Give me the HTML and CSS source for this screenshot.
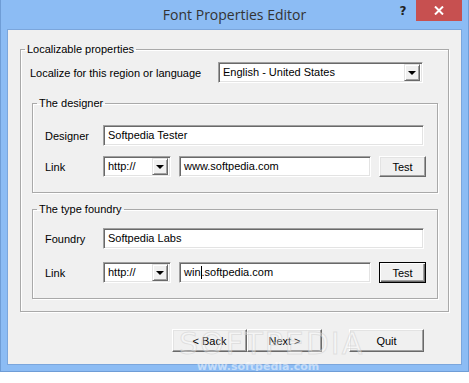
FILE: index.html
```html
<!DOCTYPE html>
<html lang="en">

<head>
    <meta charset="UTF-8">
    <meta name="viewport" content="width=device-width, initial-scale=1.0">
    <title>Font Properties Editor</title>
    <link rel="stylesheet" href="styles.css">
</head>

<body>
    <div class="window">
        <div class="titlebar">
            <span></span>
            <h1>Font Properties Editor</h1>
            <div class="caption-buttons">
                <span class="help">?</span>
                <span class="close">
                    <svg width="10" height="9" viewBox="0 0 10 9">
                        <path d="M1 0.5 L9 8.5 M9 0.5 L1 8.5" stroke="#fff" stroke-width="2" fill="none" />
                    </svg>
                </span>
            </div>
        </div>

        <div class="client">
            <fieldset class="group outer">
                <legend>Localizable properties</legend>
                <div class="group-body">
                    <div class="row lang-row">
                        <label>Localize for this region or language</label>
                        <div class="combo lang-combo">
                            <span>English - United States</span>
                            <span class="drop"><i></i></span>
                        </div>
                    </div>

                    <fieldset class="group inner designer">
                        <legend>The designer</legend>
                        <div class="inner-body">
                            <div class="row">
                                <label>Designer</label>
                                <div class="edit wide">Softpedia Tester</div>
                            </div>
                            <div class="row">
                                <label>Link</label>
                                <div class="combo proto">
                                    <span>http://</span>
                                    <span class="drop"><i></i></span>
                                </div>
                                <div class="edit url">www.softpedia.com</div>
                                <button class="btn test">Test</button>
                            </div>
                        </div>
                    </fieldset>

                    <fieldset class="group inner foundry">
                        <legend>The type foundry</legend>
                        <div class="inner-body">
                            <div class="row">
                                <label>Foundry</label>
                                <div class="edit wide">Softpedia Labs</div>
                            </div>
                            <div class="row">
                                <label>Link</label>
                                <div class="combo proto">
                                    <span>http://</span>
                                    <span class="drop"><i></i></span>
                                </div>
                                <div class="edit url">win<span class="caret"></span>.softpedia.com</div>
                                <button class="btn test default">Test</button>
                            </div>
                        </div>
                    </fieldset>
                </div>
            </fieldset>

            <div class="actions">
                <button class="btn">&lt; Back</button>
                <button class="btn">Next &gt;</button>
                <button class="btn quit">Quit</button>
            </div>

            <div class="watermark">SOFTPEDIA</div>
        </div>
        <div class="watermark-url">www.softpedia.com</div>
    </div>
</body>

</html>
```

FILE: styles.css
```css
* {
    margin: 0;
    padding: 0;
    box-sizing: border-box;
}

body {
    background-color: white;
    font-family: "Liberation Sans", Arial, sans-serif;
    font-size: 11px;
    color: black;
}

.window {
    width: 469px;
    height: 372px;
    background-color: #8cbcf4;
    border: 1px solid #6f9dd6;
    border-top: none;
    position: relative;
    overflow: hidden;
}

.titlebar {
    height: 30px;
    display: grid;
    grid-template-columns: 1fr auto 1fr;
}

.titlebar h1 {
    font-family: "Open Sans", "Noto Sans", sans-serif;
    font-weight: 400;
    font-size: 14px;
    color: #333;
    line-height: 30px;
    text-align: center;
}

.caption-buttons {
    display: flex;
    justify-content: flex-end;
    align-items: flex-start;
    margin-right: 6px;
}

.caption-buttons .help {
    width: 26px;
    height: 21px;
    text-align: center;
    font-family: "DejaVu Sans", sans-serif;
    font-weight: 700;
    font-size: 12px;
    line-height: 22px;
    color: #222;
}

.caption-buttons .close {
    width: 46px;
    height: 21px;
    background-color: #c75050;
    display: flex;
    align-items: center;
    justify-content: center;
}

.client {
    margin: 0 7px;
    height: 334px;
    background-color: #f0f0f0;
    box-shadow: 0 0 0 1px #7ba6dc;
    padding: 12px 0 0 12px;
}

/* group boxes */
.group {
    border: 1px solid #a9a9a9;
    box-shadow: 1px 1px 0 #fff, inset 1px 1px 0 #fff;
    min-width: 0;
}

.group legend {
    margin-left: 4px;
    padding: 0 2px;
    line-height: 14px;
}

.outer {
    width: 429px;
}

.group-body {
    padding: 6px 9px 12px 9px;
}

.inner {
    width: 406px;
    margin-left: 2px;
}

.designer {
    margin-top: 13px;
}

.designer .inner-body {
    padding: 15px 0 15px 12px;
    display: flex;
    flex-direction: column;
    gap: 10px;
}

.foundry {
    margin-top: 9px;
}

.foundry .inner-body {
    padding: 12px 0 15px 12px;
    display: flex;
    flex-direction: column;
    gap: 13px;
}

.row {
    display: flex;
    align-items: center;
    height: 21px;
}

.row label {
    width: 58px;
}

.lang-row label {
    width: 188px;
}

/* sunken controls */
.edit,
.combo {
    height: 21px;
    background-color: white;
    border-top: 1px solid #a0a0a0;
    border-left: 1px solid #a0a0a0;
    border-bottom: 1px solid #fff;
    border-right: 1px solid #fff;
    box-shadow: inset 1px 1px 0 #696969, inset -1px -1px 0 #e3e3e3;
    padding-left: 4px;
    line-height: 19px;
    white-space: nowrap;
}

.wide {
    width: 321px;
}

.url {
    width: 192px;
    margin-left: 8px;
}

.caret {
    display: inline-block;
    width: 1px;
    height: 13px;
    background-color: black;
    vertical-align: -3px;
}

.combo {
    display: flex;
    justify-content: space-between;
    padding-right: 2px;
}

.lang-combo {
    width: 205px;
}

.proto {
    width: 68px;
}

.drop {
    width: 16px;
    height: 17px;
    margin-top: 1px;
    background-color: #f0f0f0;
    border-top: 1px solid #e3e3e3;
    border-left: 1px solid #e3e3e3;
    border-bottom: 1px solid #696969;
    border-right: 1px solid #696969;
    box-shadow: inset 1px 1px 0 #fff, inset -1px -1px 0 #a0a0a0;
    display: flex;
    align-items: center;
    justify-content: center;
}

.drop i {
    width: 0;
    height: 0;
    border-left: 4px solid transparent;
    border-right: 4px solid transparent;
    border-top: 4px solid black;
}

/* raised buttons */
.btn {
    font-family: inherit;
    font-size: 11px;
    color: black;
    width: 75px;
    height: 23px;
    background-color: #f0f0f0;
    border-top: 1px solid #fff;
    border-left: 1px solid #fff;
    border-bottom: 1px solid #696969;
    border-right: 1px solid #696969;
    box-shadow: inset -1px -1px 0 #a0a0a0, inset 1px 1px 0 #e3e3e3;
}

.test {
    width: 47px;
    height: 21px;
    margin-left: 8px;
}

.test.default {
    border: 1px solid #000;
    box-shadow: inset 1px 1px 0 #fff, inset -1px -1px 0 #696969, inset -2px -2px 0 #a0a0a0;
}

.actions {
    display: flex;
    margin-top: 17px;
    padding-left: 152px;
}

.actions .quit {
    margin-left: 27px;
}

/* softpedia watermark drawn over the dialog */
.watermark {
    position: absolute;
    left: 178px;
    top: 326px;
    font-family: "DejaVu Sans", sans-serif;
    font-size: 30px;
    letter-spacing: 2px;
    color: rgba(255, 255, 255, 0.35);
    -webkit-text-stroke: 1px rgba(200, 200, 200, 0.45);
    pointer-events: none;
}

.watermark-url {
    position: absolute;
    left: 196px;
    top: 360px;
    font-family: "DejaVu Sans", sans-serif;
    font-weight: 700;
    font-size: 11px;
    color: rgba(255, 255, 255, 0.5);
}
```
